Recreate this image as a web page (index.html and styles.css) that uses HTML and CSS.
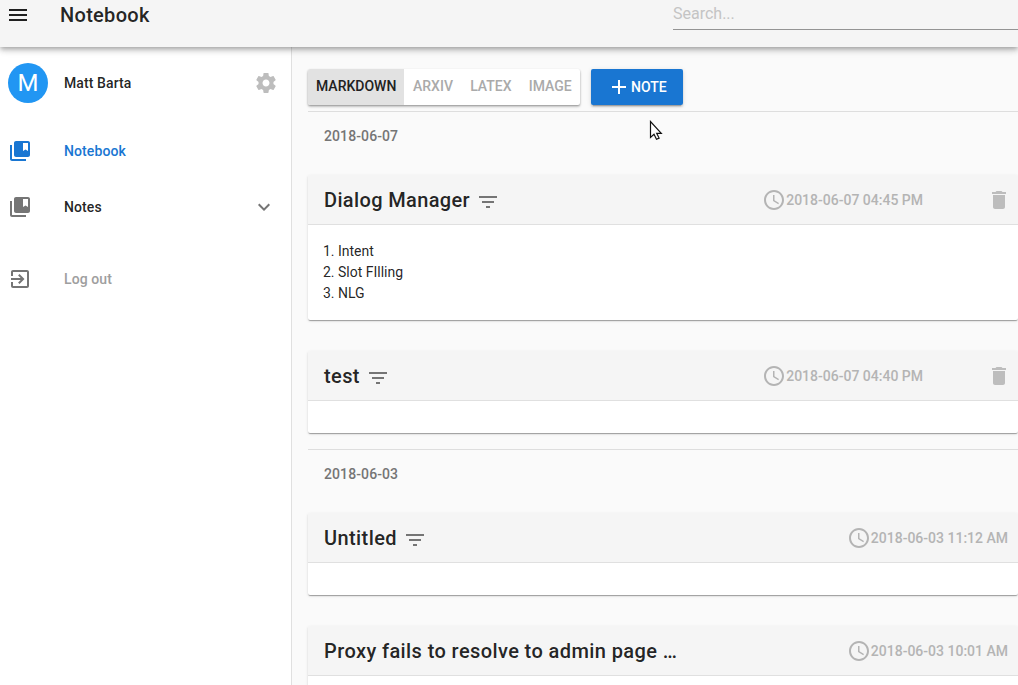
FILE: index.html
```
<!DOCTYPE html>
<html lang="en">
<head>
<meta charset="utf-8">
<title>Notebook</title>
<link rel="stylesheet" href="styles.css">
</head>
<body>
<svg class="defs" width="0" height="0">
  <symbol id="menu" viewBox="0 0 24 24"><path d="M3 18h18v-2H3v2zm0-5h18v-2H3v2zm0-7v2h18V6H3z"/></symbol>
  <symbol id="gear" viewBox="0 0 24 24"><path d="M19.43 12.98c.04-.32.07-.64.07-.98s-.03-.66-.07-.98l2.11-1.65c.19-.15.24-.42.12-.64l-2-3.46c-.12-.22-.39-.3-.61-.22l-2.49 1c-.52-.4-1.08-.73-1.69-.98l-.38-2.65C14.46 2.18 14.25 2 14 2h-4c-.25 0-.46.18-.49.42l-.38 2.65c-.61.25-1.17.59-1.69.98l-2.49-1c-.23-.09-.49 0-.61.22l-2 3.46c-.13.22-.07.49.12.64l2.11 1.65c-.04.32-.07.65-.07.98s.03.66.07.98l-2.11 1.65c-.19.15-.24.42-.12.64l2 3.46c.12.22.39.3.61.22l2.49-1c.52.4 1.08.73 1.69.98l.38 2.65c.03.24.24.42.49.42h4c.25 0 .46-.18.49-.42l.38-2.65c.61-.25 1.17-.59 1.69-.98l2.49 1c.23.09.49 0 .61-.22l2-3.46c.12-.22.07-.49-.12-.64l-2.11-1.65zM12 15.5c-1.93 0-3.5-1.57-3.5-3.5s1.57-3.5 3.5-3.5 3.5 1.57 3.5 3.5-1.57 3.5-3.5 3.5z"/></symbol>
  <symbol id="book" viewBox="0 0 24 24"><path d="M4 6H2v14c0 1.100.9 2 2 2h14v-2H4V6z"/><path d="M20 2H8c-1.100 0-2 .9-2 2v12c0 1.100.9 2 2 2h12c1.100 0 2-.9 2-2V4c0-1.100-.9-2-2-2zm0 10l-2.500-1.500L15 12V4h5v8z"/></symbol>
  <symbol id="expand" viewBox="0 0 24 24"><path d="M16.590 8.590L12 13.170 7.410 8.590 6 10l6 6 6-6z"/></symbol>
  <symbol id="exit" viewBox="0 0 24 24"><path d="M10.090 15.590L11.500 17l5-5-5-5-1.410 1.410L12.670 11H3v2h9.670l-2.580 2.590zM19 3H5c-1.110 0-2 .9-2 2v4h2V5h14v14H5v-4H3v4c0 1.100.89 2 2 2h14c1.100 0 2-.9 2-2V5c0-1.100-.9-2-2-2z"/></symbol>
  <symbol id="filter" viewBox="0 0 24 24"><path d="M10 18h4v-2h-4v2zM3 6v2h18V6H3zm3 7h12v-2H6v2z"/></symbol>
  <symbol id="clock" viewBox="0 0 24 24"><path d="M11.990 2C6.470 2 2 6.480 2 12s4.470 10 9.990 10C17.520 22 22 17.520 22 12S17.520 2 11.990 2zM12 20c-4.420 0-8-3.580-8-8s3.580-8 8-8 8 3.580 8 8-3.580 8-8 8z"/><path d="M12.500 7H11v6l5.250 3.150.75-1.230-4.500-2.670z"/></symbol>
  <symbol id="trash" viewBox="0 0 24 24"><path d="M6 19c0 1.100.9 2 2 2h8c1.100 0 2-.9 2-2V7H6v12zM19 4h-3.500l-1-1h-5l-1 1H5v2h14V4z"/></symbol>
  <symbol id="plus" viewBox="0 0 24 24"><path d="M19 13h-6v6h-2v-6H5v-2h6V5h2v6h6v2z"/></symbol>
</svg>

<header class="toolbar">
  <svg class="icon"><use href="#menu"/></svg>
  <h1 class="toolbar-title">Notebook</h1>
  <div class="search">Search...</div>
</header>

<div class="layout">
  <nav class="drawer">
    <div class="profile">
      <span class="avatar">M</span>
      <span class="label">Matt Barta</span>
      <svg class="icon gear"><use href="#gear"/></svg>
    </div>
    <div class="item active"><svg class="icon"><use href="#book"/></svg><span class="label">Notebook</span></div>
    <div class="item"><svg class="icon"><use href="#book"/></svg><span class="label">Notes</span><svg class="icon"><use href="#expand"/></svg></div>
    <div class="item logout"><svg class="icon"><use href="#exit"/></svg><span class="label">Log out</span></div>
  </nav>

  <main class="content">
    <div class="actions">
      <div class="toggle">
        <span class="option selected">MARKDOWN</span><span class="option">ARXIV</span><span class="option">LATEX</span><span class="option">IMAGE</span>
      </div>
      <div class="add"><svg class="icon"><use href="#plus"/></svg>NOTE</div>
    </div>

    <div class="date">2018-06-07</div>
    <article class="card">
      <div class="card-head">
        <h2 class="card-title tight">Dialog Manager</h2><svg class="icon filter"><use href="#filter"/></svg>
        <div class="time"><svg class="icon"><use href="#clock"/></svg><span class="stamp">2018-06-07 04:45 PM</span></div>
        <svg class="icon trash"><use href="#trash"/></svg>
      </div>
      <div class="card-body">
        <ol class="list"><li>Intent</li><li>Slot FIlling</li><li>NLG</li></ol>
      </div>
    </article>
    <article class="card">
      <div class="card-head">
        <h2 class="card-title">test</h2><svg class="icon filter"><use href="#filter"/></svg>
        <div class="time"><svg class="icon"><use href="#clock"/></svg><span class="stamp">2018-06-07 04:40 PM</span></div>
        <svg class="icon trash"><use href="#trash"/></svg>
      </div>
      <div class="card-body"></div>
    </article>

    <div class="date">2018-06-03</div>
    <article class="card">
      <div class="card-head">
        <h2 class="card-title">Untitled</h2><svg class="icon filter"><use href="#filter"/></svg>
        <div class="time last"><svg class="icon"><use href="#clock"/></svg><span class="stamp">2018-06-03 11:12 AM</span></div>
      </div>
      <div class="card-body"></div>
    </article>
    <article class="card">
      <div class="card-head">
        <h2 class="card-title">Proxy fails to resolve to admin page …</h2>
        <div class="time last"><svg class="icon"><use href="#clock"/></svg><span class="stamp">2018-06-03 10:01 AM</span></div>
      </div>
      <div class="card-body"></div>
    </article>
  </main>
</div>

<svg class="cursor" viewBox="0 0 14 21"><path d="M1.500 1.500v16l3.500-3.200 2.500 5 2.600-1.200-2.400-4.800h4.600z"/></svg>
</body>
</html>
```
FILE: styles.css
```
* { box-sizing: border-box; }

body {
  margin: 0;
  height: 685px;
  overflow: hidden;
  background: #fafafa;
  color: rgba(0, 0, 0, .87);
  font: 14px/21px Roboto, sans-serif;
  white-space: nowrap;
}

.defs { position: absolute; }

.icon {
  display: block;
  flex: none;
  width: 24px;
  height: 24px;
  fill: currentColor;
}

.toolbar {
  position: relative;
  z-index: 1;
  display: flex;
  align-items: flex-start;
  height: 47px;
  padding: 3px 0 0 6px;
  background: #f5f5f5;
  box-shadow: 0 2px 4px -1px rgba(0, 0, 0, .2), 0 4px 5px rgba(0, 0, 0, .14), 0 1px 10px rgba(0, 0, 0, .12);
}

.toolbar-title,
.card-title {
  margin: 0;
  font-size: 20px;
  font-weight: 500;
  line-height: 24px;
  letter-spacing: .4px;
}

.toolbar-title { width: 613px; margin-left: 30px; letter-spacing: .3px; }
.card-title.tight { letter-spacing: .36px; }

.search {
  flex: 1;
  height: 27px;
  border-bottom: 1px solid #949494;
  color: #c4c4c4;
  font-size: 16px;
  line-height: 22px;
}

.layout { display: flex; height: 638px; }

.drawer {
  flex: none;
  width: 292px;
  padding: 8px 15px 0 8px;
  background: #fff;
  border-right: 1px solid #e0e0e0;
  font-weight: 500;
}

.profile { display: flex; align-items: center; height: 56px; margin-bottom: 12px; padding-right: 13px; }
.avatar {
  width: 40px;
  height: 40px;
  margin-right: 16px;
  border-radius: 50%;
  background: #2196f3;
  color: #fff;
  font-size: 24px;
  font-weight: 400;
  line-height: 40px;
  text-align: center;
}
.label { flex: 1; letter-spacing: .1px; }
.profile .gear { margin-right: -15px; color: #bdbdbd; }

.item { display: flex; align-items: center; height: 56px; }
.item .icon { color: #757575; }
.item .icon:first-child { margin-right: 32px; }
.item.active, .item.active .icon { color: #1976d2; }
.logout { margin-top: 16px; color: #9e9e9e; }

.content { flex: 1; min-width: 0; padding: 22px 0 0 16px; }

.actions { display: flex; height: 42px; }
.toggle {
  display: flex;
  width: 272px;
  height: 36px;
  margin-right: 11px;
  border-radius: 2px;
  background: #fff;
  box-shadow: 0 1px 2px rgba(0, 0, 0, .3), 0 2px 3px rgba(0, 0, 0, .15);
}
.option {
  padding: 0 8.2px 0 9px;
  color: #aaa;
  font-weight: 500;
  line-height: 34px;
}
.option.selected { width: 96px; padding: 0 8px; background: #e2e2e2; color: #212121; border-radius: 2px 0 0 2px; }

.add {
  display: flex;
  align-items: center;
  width: 92px;
  height: 36px;
  padding-left: 16px;
  border-radius: 2px;
  background: #1976d2;
  box-shadow: 0 3px 1px -2px rgba(0, 0, 0, .2), 0 2px 2px rgba(0, 0, 0, .14), 0 1px 5px rgba(0, 0, 0, .12);
  color: #fff;
  font-weight: 500;
}

.date {
  height: 49px;
  padding-left: 16px;
  border-top: 1px solid #dedede;
  color: #757575;
  font-weight: 500;
  line-height: 48px;
  letter-spacing: .1px;
}

.card {
  margin: 15px 0 31px;
  border-radius: 2px;
  background: #fff;
  box-shadow: 0 2px 1px -1px rgba(0, 0, 0, .2), 0 1px 1px rgba(0, 0, 0, .14), 0 1px 3px rgba(0, 0, 0, .12);
}
.card + .card { margin-top: 0; }
.card:has(+ .date) { margin-bottom: 16px; }

.card-head {
  display: flex;
  align-items: center;
  height: 50px;
  padding: 0 7px 0 16px;
  border-bottom: 1px solid #e0e0e0;
  border-radius: 2px 2px 0 0;
  background: #f5f5f5;
}
.filter { margin: 4px 0 0 6px; color: #757575; }
.card-body { min-height: 32px; }

.time {
  display: flex;
  align-items: center;
  margin-left: auto;
  margin-right: 64px;
  color: #b4b4b4;
  font-weight: 500;
}
.time.last { margin-right: 3px; }
.stamp { padding-top: 2px; }
.trash { color: #bdbdbd; }

.list { height: 95px; margin: 0; padding: 16px 0 0 30px; }

.cursor {
  position: absolute;
  left: 649px;
  top: 120px;
  width: 14px;
  height: 21px;
  fill: #fff;
  stroke: #111;
  stroke-width: 1.2;
}
```
